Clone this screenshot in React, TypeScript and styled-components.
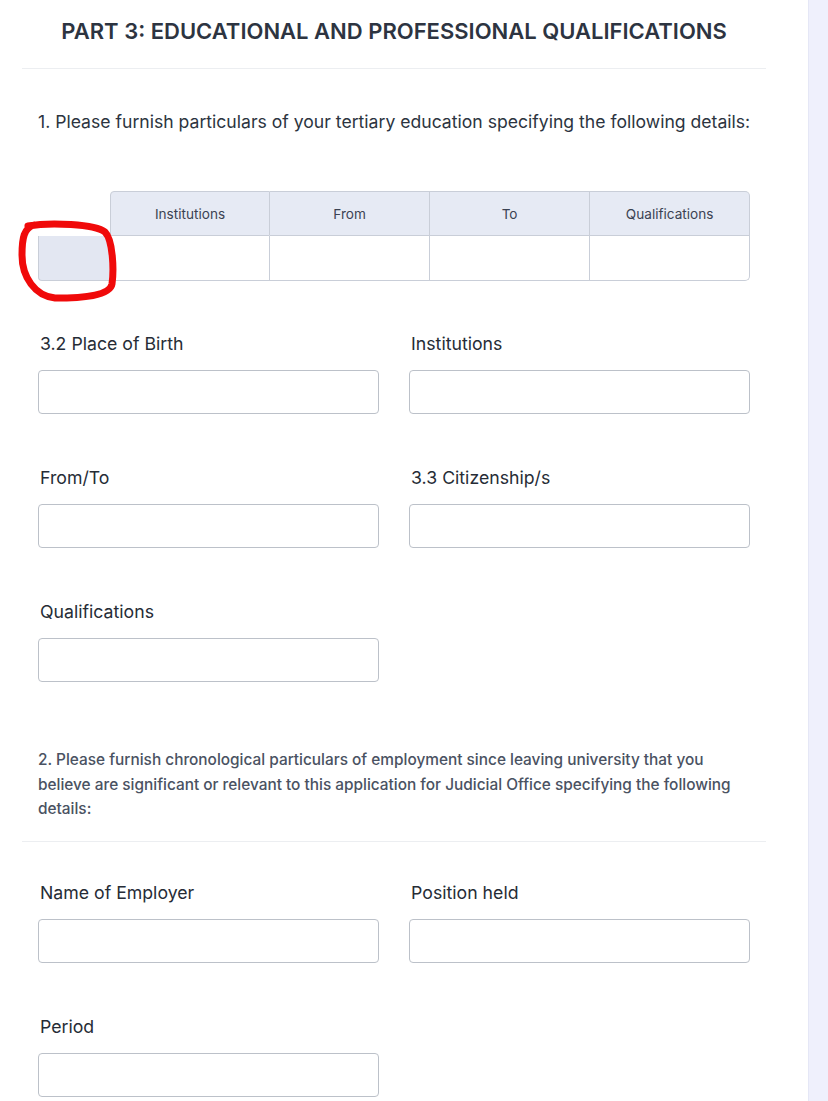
import styled, { createGlobalStyle } from 'styled-components';

const GlobalStyle = createGlobalStyle`
  * { box-sizing: border-box; }
  body {
    margin: 0;
    background: #ffffff;
    font-family: Inter, "Noto Sans", "Liberation Sans", sans-serif;
    color: #2b313b;
  }
`;

const Page = styled.div`
  display: flex;
  min-height: 1101px;
`;

const Main = styled.main`
  flex: 1;
  padding: 0 42px 0 22px;
`;

const Sidebar = styled.aside`
  width: 20px;
  background: #eff0fc;
  border-left: 1px solid #e5e7f6;
`;

const SectionHead = styled.header`
  padding: 17px 0 23px;
  border-bottom: 1px solid #eceef1;
`;

const Title = styled.h1`
  margin: 0;
  text-align: center;
  font-size: 22px;
  line-height: 28px;
  font-weight: 600;
  color: #2d3441;
`;

const Body = styled.div`
  padding: 0 16px;
`;

const Lead = styled.p`
  margin: 40px 0 0;
  font-size: 17.6px;
  line-height: 26px;
  color: #2c3440;
  white-space: nowrap;
`;

const TableWrap = styled.div`
  position: relative;
  margin-top: 56px;
`;

const Grid = styled.div`
  display: grid;
  grid-template-columns: 72px repeat(4, 1fr);
`;

type CellKind = 'corner' | 'head' | 'stub' | 'data';

const Cell = styled.div<{ kind: CellKind; first?: boolean; last?: boolean }>`
  display: flex;
  align-items: center;
  justify-content: center;
  font-size: 13.6px;
  color: #3b4252;
  height: 45px;
  background: ${(p) =>
    p.kind === 'head' ? '#e6eaf4' : p.kind === 'stub' ? '#e3e7f2' : 'transparent'};
  border-color: #c9ced8;
  border-style: solid;
  border-width: ${(p) =>
    p.kind === 'corner'
      ? '0'
      : p.kind === 'head'
      ? `1px 1px 1px ${p.first ? '1px' : '0'}`
      : p.kind === 'stub'
      ? '0 0 1px 1px'
      : '0 1px 1px 0'};
  border-top-left-radius: ${(p) => (p.kind === 'head' && p.first ? '4px' : '0')};
  border-top-right-radius: ${(p) => (p.kind === 'head' && p.last ? '5px' : '0')};
  border-bottom-right-radius: ${(p) => (p.kind === 'data' && p.last ? '5px' : '0')};
  border-bottom-left-radius: ${(p) => (p.kind === 'stub' ? '4px' : '0')};
`;

const Scribble = styled.svg`
  position: absolute;
  left: -18px;
  top: 29px;
  width: 100px;
  height: 85px;
  pointer-events: none;
  overflow: visible;
`;

const Fields = styled.div<{ top: number }>`
  display: grid;
  grid-template-columns: 1fr 1fr;
  column-gap: 30px;
  row-gap: 52px;
  margin-top: ${(p) => p.top}px;
`;

const Field = styled.label`
  display: flex;
  flex-direction: column;
  gap: 14px;
`;

const Label = styled.span`
  padding-left: 2px;
  font-size: 17.7px;
  line-height: 24px;
  font-weight: 400;
  color: #262c36;
`;

const Input = styled.input`
  height: 44px;
  width: 100%;
  border: 1px solid #bcc1c9;
  border-radius: 4px;
  background: #fff;
  font: inherit;
`;

const Note = styled.p`
  margin: 66px 0 0;
  font-size: 15.4px;
  line-height: 24.5px;
  font-weight: 500;
  color: #4a5262;
`;

const Divider = styled.hr`
  margin: 19px -16px 0;
  border: 0;
  border-top: 1px solid #eceef1;
`;

const heads = ['Institutions', 'From', 'To', 'Qualifications'];

export default function App() {
  return (
    <Page>
      <GlobalStyle />
      <Main>
        <SectionHead>
          <Title>PART 3: EDUCATIONAL AND PROFESSIONAL QUALIFICATIONS</Title>
        </SectionHead>
        <Body>
          <Lead>
            1. Please furnish particulars of your tertiary education specifying the following
            details:
          </Lead>

          <TableWrap>
            <Grid>
              <Cell kind="corner" />
              {heads.map((h, i) => (
                <Cell key={h} kind="head" first={i === 0} last={i === heads.length - 1}>
                  {h}
                </Cell>
              ))}
              <Cell kind="stub" />
              {heads.map((h, i) => (
                <Cell key={h} kind="data" last={i === heads.length - 1} />
              ))}
            </Grid>
            <Scribble viewBox="0 0 100 85">
              <path
                d="M 8 6 C 30 2, 75 4, 85 12 C 93 20, 94 50, 92 64 C 90 76, 62 78, 35 78 C 15 76, 2 57, 2 35 C 2 18, 4 8, 14 5"
                fill="none"
                stroke="#f00a0a"
                strokeWidth="7"
                strokeLinecap="round"
                strokeLinejoin="round"
              />
            </Scribble>
          </TableWrap>

          <Fields top={51}>
            <Field>
              <Label>3.2 Place of Birth</Label>
              <Input />
            </Field>
            <Field>
              <Label>Institutions</Label>
              <Input />
            </Field>
            <Field>
              <Label>From/To</Label>
              <Input />
            </Field>
            <Field>
              <Label>3.3 Citizenship/s</Label>
              <Input />
            </Field>
            <Field>
              <Label>Qualifications</Label>
              <Input />
            </Field>
          </Fields>

          <Note>
            2. Please furnish chronological particulars of employment since leaving university that
            you believe are significant or relevant to this application for Judicial Office
            specifying the following details:
          </Note>
          <Divider />

          <Fields top={39}>
            <Field>
              <Label>Name of Employer</Label>
              <Input />
            </Field>
            <Field>
              <Label>Position held</Label>
              <Input />
            </Field>
            <Field>
              <Label>Period</Label>
              <Input />
            </Field>
          </Fields>
        </Body>
      </Main>
      <Sidebar />
    </Page>
  );
}
